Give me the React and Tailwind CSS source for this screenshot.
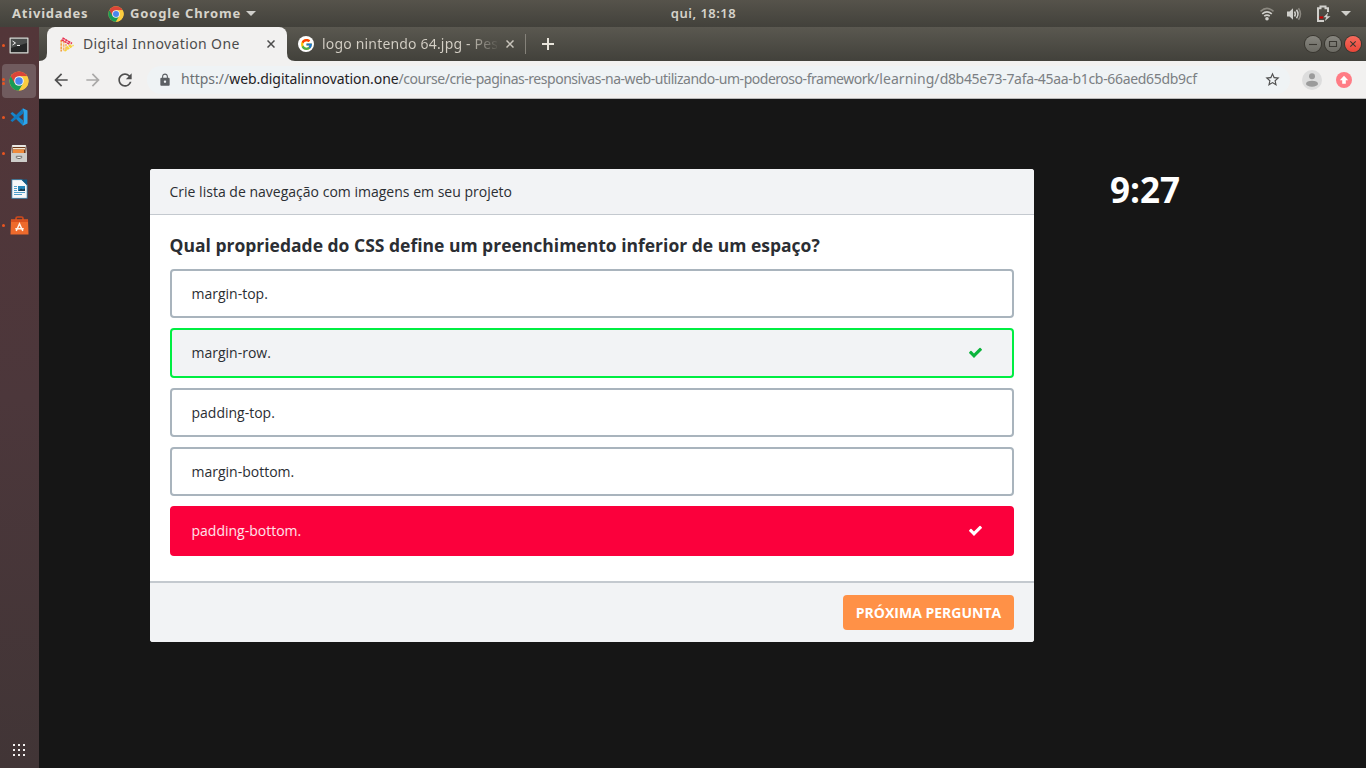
import React from "react";
import { FcGoogle } from "react-icons/fc";
import { MdArrowBack, MdArrowForward, MdRefresh, MdLock, MdStarBorder } from "react-icons/md";

function ChromeLogo({ className }) {
  return (
    <svg viewBox="0 0 48 48" className={className}>
      <circle cx="24" cy="24" r="23" fill="#fbc93a" />
      <path d="M24 24 L4.1 12.5 A23 23 0 0 0 24 47 L34 29.8Z" fill="#189b57" />
      <path d="M24 24 L14 29.8 L4.1 12.5 A23 23 0 0 1 43.9 12.5 L24 12.5Z" fill="#db4538" />
      <path d="M24 12.5H43.9A23 23 0 0 1 24 47L34 29.8Z" fill="#fccd3f" />
      <circle cx="24" cy="24" r="11.5" fill="#f4f4f2" />
      <circle cx="24" cy="24" r="9" fill="#4986ee" />
    </svg>
  );
}

function TerminalIcon() {
  return (
    <svg viewBox="0 0 20 17" className="h-[17px] w-5">
      <rect x=".5" y=".5" width="19" height="16" rx="1" fill="#d7d7d4" stroke="#8d8a87" strokeWidth=".6" />
      <rect x="1.8" y="1.8" width="16.4" height="13.4" fill="#252727" />
      <path d="M2 2h16v4L2 11z" fill="#4a4d4c" />
      <path d="M3.5 4l3 2-3 2M8 8.5h3" stroke="#f4f4f4" strokeWidth="1" fill="none" />
    </svg>
  );
}

function CodeIcon() {
  return (
    <svg viewBox="0 0 18 18" className="h-[18px] w-[18px]">
      <path d="M.5 5.5 2.3 4 13 12.3v5.4z" fill="#1687cc" />
      <path d="M.5 12.5 2.3 14 13 5.7V.3z" fill="#117ac0" />
      <path d="M12.8.3 13.6 5v8l-.8 4.7 4.7-2.2v-13z" fill="#2ba6ee" />
    </svg>
  );
}

function FilesIcon() {
  return (
    <svg viewBox="0 0 18 19" className="h-[19px] w-[18px]">
      <path d="M2 1h14l1 7v10H1V8z" fill="#bfbebb" />
      <path d="M2.5 1h13v2h-13z" fill="#e9e8e5" />
      <path d="M2.5 3h13v6h-13z" fill="#6c3a1c" />
      <path d="M3 4h12v1.5H3z" fill="#f3e6d0" />
      <path d="M3 5.5h11V9H3z" fill="#ee8a3c" />
      <rect x="1" y="9" width="16" height="9" rx="1" fill="#cecdca" />
      <path d="M6.3 12.3v1.5q2.7 1.8 5.4 0v-1.5z" stroke="#73716e" strokeWidth="1" fill="#efefed" />
    </svg>
  );
}

function WriterIcon() {
  return (
    <svg viewBox="0 0 17 20" className="h-5 w-[17px]">
      <path d="M.8.6H11l5.2 5.2v13.6H.8z" fill="#f6f8f9" stroke="#206a94" strokeWidth=".8" />
      <path d="M10.2.4h6v6z" fill="#125b86" />
      <path d="M3 7.5h3M3 9.5h3M3 11.5h3M3 13.5h11M3 15.5h8" stroke="#4f9fca" strokeWidth="1" />
      <path d="M7 7h7v5H7z" fill="#2585b8" />
      <path d="M7 12l3-2.4 2 1 2-1V12z" fill="#173c52" />
    </svg>
  );
}

function SoftwareIcon() {
  return (
    <svg viewBox="0 0 19 19" className="h-[19px] w-[19px]">
      <path d="M6 4V2.4Q6 1 7.5 1h4Q13 1 13 2.4V4" stroke="#cf4a1c" strokeWidth="1.7" fill="none" />
      <path d="M1 3.5h17l.5 15H.5z" fill="#ee6a2c" />
      <path d="M1 3.5h17l.1 2.5H.9z" fill="#d9501e" />
      <path d="M6.2 15 9.5 7.8 12.8 15M5.3 12.7h8.4" stroke="#fff3e9" strokeWidth="1.5" fill="none" />
    </svg>
  );
}

function CheckIcon({ className }) {
  return (
    <svg viewBox="0 0 1792 1792" fill="currentColor" className={className}>
      <path d="M1671 566q0 40-28 68l-724 724-136 136q-28 28-68 28t-68-28l-136-136-362-362q-28-28-28-68t28-68l136-136q28-28 68-28t68 28l294 295 656-657q28-28 68-28t68 28l136 136q28 28 28 68z" />
    </svg>
  );
}

function DockItem({ children, dots = 0, active }) {
  return (
    <div className="flex h-9 items-center pl-[2px]">
      <div className={active ? "relative flex h-[34px] w-[34px] items-center justify-center rounded-[4px] bg-[#705b5e]" : "relative flex h-[34px] w-[34px] items-center justify-center"}>
        <div className="absolute inset-y-0 left-0 flex flex-col justify-center gap-[1px]">
          {Array.from({ length: dots }).map((_, i) => (
            <span key={i} className="h-[3px] w-[3px] rounded-full bg-[#e95420]" />
          ))}
        </div>
        {children}
      </div>
    </div>
  );
}

function Dock() {
  return (
    <aside className="flex w-[39px] shrink-0 flex-col bg-linear-to-b from-[#533639] via-[#4c373b] to-[#413536]">
      <DockItem dots={1}><TerminalIcon /></DockItem>
      <DockItem dots={2} active><ChromeLogo className="h-[20px] w-[20px]" /></DockItem>
      <DockItem dots={1}><CodeIcon /></DockItem>
      <DockItem dots={1}><FilesIcon /></DockItem>
      <DockItem><WriterIcon /></DockItem>
      <DockItem dots={1}><SoftwareIcon /></DockItem>
      <div className="mt-auto mb-[12px] ml-[13px] grid w-3 grid-cols-3 gap-[3px]">
        {Array.from({ length: 9 }).map((_, i) => (
          <span key={i} className="h-[2px] w-[2px] bg-[#f4f2f1]" />
        ))}
      </div>
    </aside>
  );
}

function TopBar() {
  return (
    <header className="grid h-[27px] shrink-0 grid-cols-[1fr_auto_1fr] items-center bg-linear-to-b from-[#56534b] to-[#42413b] font-['Noto_Sans',sans-serif] text-[13px] font-bold text-[#d6d3cb]">
      <div className="flex items-center whitespace-nowrap pl-3">
        <span className="w-[76px] tracking-[0.8px]">Atividades</span>
        <ChromeLogo className="ml-5 h-4 w-4" />
        <span className="ml-[6px] w-[112px] tracking-[0.87px]">Google Chrome</span>
        <svg viewBox="0 0 10 5" className="ml-[4px] h-[5px] w-[10px]"><path d="M0 0h10L5 5z" fill="#d0cfcb" /></svg>
      </div>
      <span className="pl-[41px] font-semibold tracking-[0.5px]">qui, 18:18</span>
      <div className="flex items-center justify-end pr-[15px]">
        <svg viewBox="0 0 14 14" className="h-[14px] w-[14px]" fill="none" strokeWidth="1.6">
          <path d="M.5 4.4Q7-1.5 13.5 4.4" stroke="#8b8880" />
          <path d="M2.2 6.8Q7 2.8 11.8 6.8" stroke="#d0cfcb" />
          <path d="M4.2 9.2Q7 7 9.8 9.2" stroke="#d0cfcb" />
          <circle cx="7" cy="11.8" r="1.8" fill="#d0cfcb" />
        </svg>
        <svg viewBox="0 0 16 14" className="ml-3 h-[14px] w-4" fill="none" strokeWidth="1.5">
          <path d="M1 4.5h2.5L7 1.3v11.4L3.5 9.5H1z" fill="#d0cfcb" />
          <path d="M8.5 4.5q1.7 2.5 0 5M10.5 2.8q3 4.2 0 8.4" stroke="#d0cfcb" />
          <path d="M12.5 1.3q4 5.7 0 11.4" stroke="#8b8880" />
        </svg>
        <svg viewBox="0 0 15 17" className="ml-[14px] h-[17px] w-[15px]" fill="none">
          <path d="M6 15.9H2V3.2h2.5V1.5h5v1.7H12V7M6 15.9h2" stroke="#d0cfcb" strokeWidth="2" />
          <path d="M3.6 11.4h3.6v2.1H3.6z" fill="#cc0000" />
          <path d="M12.2 7.5 7.5 12.2h2.8L8.6 16.2l5.9-4.9h-3.4z" fill="#d0cfcb" />
        </svg>
        <svg viewBox="0 0 10 5" className="ml-[10px] h-[5px] w-[10px]"><path d="M0 0h10L5 5z" fill="#d0cfcb" /></svg>
      </div>
    </header>
  );
}

function CloseX({ className }) {
  return (
    <svg viewBox="0 0 8 8" className={className}><path d="M.5.5l7 7m0-7l-7 7" stroke="currentColor" strokeWidth="1.5" /></svg>
  );
}

function InnovationLogo() {
  return (
    <svg viewBox="0 0 14 15" className="h-[15px] w-[14px]" fill="none" strokeWidth="1.6" strokeDasharray="2.6 .6">
      <path d="M1.2 3v11.5" stroke="#f2a044" />
      <path d="M3.7 4v10M6 7v6" stroke="#f5b266" />
      <path d="M4.5 14 13.5 8.2M6 11l5.5-3.5" stroke="#f6d03c" />
      <path d="M2.5 .9 12 6.5M1.5 2.8l8.5 4.7" stroke="#e9304f" />
    </svg>
  );
}

function WindowButton({ close, children }) {
  return (
    <span className={close ? "flex h-4 w-4 items-center justify-center rounded-full bg-linear-to-b from-[#f66a5c] to-[#ea4538] ring-1 ring-[#38362f]" : "flex h-4 w-4 items-center justify-center rounded-full bg-linear-to-b from-[#87867f] to-[#6c6b64] ring-1 ring-[#38362f]"}>
      <svg viewBox="0 0 16 16" className="h-4 w-4" fill="none" stroke="#3a3832" strokeWidth="1.1">{children}</svg>
    </span>
  );
}

function TabStrip() {
  return (
    <div className="flex h-[34px] shrink-0 items-center bg-linear-to-b from-[#5a5850] to-[#42413b] font-['Noto_Sans',sans-serif] text-[14px]">
      <svg viewBox="0 0 8 8" className="h-2 w-2 self-end"><path d="M8 0v8H0Q8 8 8 0" fill="#f2f1f0" /></svg>
      <div className="flex h-full w-[240px] items-center rounded-t-[8px] bg-[#f2f1f0] pl-[13px] text-[#4c4c4c]">
        <InnovationLogo />
        <span className="mb-[2px] ml-[9px] w-[184px] whitespace-nowrap tracking-[0.38px]">Digital Innovation One</span>
        <CloseX className="h-2 w-2" />
      </div>
      <svg viewBox="0 0 8 8" className="h-2 w-2 self-end"><path d="M0 0v8h8Q0 8 0 0" fill="#f2f1f0" /></svg>
      <div className="ml-[3px] flex h-4 w-4 items-center justify-center rounded-full bg-white"><FcGoogle className="h-[13px] w-[13px]" /></div>
      <span className="mb-[2px] ml-2 w-[175px] overflow-hidden whitespace-nowrap bg-linear-to-r from-[#d5d0c6] from-82% to-[#d5d0c6]/10 bg-clip-text tracking-[0.18px] text-transparent">logo nintendo 64.jpg - Pes</span>
      <CloseX className="ml-[9px] h-2 w-2 text-[#c9c5bc]" />
      <span className="ml-[11px] h-5 w-px bg-[#85827a]" />
      <svg viewBox="0 0 12 12" className="ml-4 h-3 w-3"><path d="M6 0v12M0 6h12" stroke="#e8e4db" strokeWidth="2" /></svg>
      <div className="ml-auto flex items-center gap-1 pr-[5px]">
        <WindowButton><path d="M4 8.5h8" /></WindowButton>
        <WindowButton><path d="M4.5 5.5h7v5h-7z" /></WindowButton>
        <WindowButton close><path d="M5.3 5.3l5.4 5.4m0-5.4-5.4 5.4" /></WindowButton>
      </div>
    </div>
  );
}

function AddressBar() {
  return (
    <div className="flex h-[38px] shrink-0 items-center border-b border-[#b8b8b8] bg-[#f2f1f0] text-[#505050]">
      <MdArrowBack className="ml-3 h-5 w-5" />
      <MdArrowForward className="ml-3 h-5 w-5 text-[#aaa9a8]" />
      <MdRefresh className="ml-3 h-5 w-5" />
      <div className="ml-[12px] flex h-7 w-[1143px] items-center rounded-full bg-[#eff3f5]">
        <MdLock className="ml-[11px] h-[14px] w-[14px] text-[#5b5f63]" />
        <span className="mb-[2px] ml-[9px] whitespace-nowrap font-['Noto_Sans',sans-serif] text-[14px] text-[#7b7f83]">
          <span className="text-[#6c7074]">https://</span><span className="tracking-[-0.06px] text-[#1f2225]">web.digitalinnovation.one</span><span className="tracking-[-0.47px]">/course/crie-paginas-responsivas-na-web-utilizando-um-poderoso-framework</span><span className="tracking-[0.05px]">/learning/</span><span className="tracking-[-0.32px]">d8b45e73-7afa-45aa-b1cb-66aed65db9cf</span>
        </span>
        <MdStarBorder className="ml-auto mr-[9px] h-[17px] w-[17px]" />
      </div>
      <svg viewBox="0 0 20 20" className="ml-[12px] h-5 w-5">
        <circle cx="10" cy="10" r="10" fill="#dddddd" />
        <circle cx="10" cy="6.2" r="3" fill="#9b9b9b" /><ellipse cx="10" cy="13.7" rx="6" ry="3" fill="#9b9b9b" />
      </svg>
      <svg viewBox="0 0 16 16" className="ml-[14px] h-4 w-4">
        <circle cx="8" cy="8" r="8" fill="#ff7c85" /><path d="M8 3.8l4.2 4.4H9.8v3.6H6.2V8.2H3.8z" fill="#fff" />
      </svg>
    </div>
  );
}

const answers = [
  { label: "margin-top.", look: "border-[#a9b4bd] bg-white text-[#2b2e33]" },
  { label: "margin-row.", look: "border-[#00ee42] bg-[#f2f3f5] text-[#2b2e33]", check: "text-[#0cb43c]" },
  { label: "padding-top.", look: "border-[#a9b4bd] bg-white text-[#2b2e33]" },
  { label: "margin-bottom.", look: "border-[#a9b4bd] bg-white text-[#2b2e33]" },
  { label: "padding-bottom.", look: "border-[#fb003c] bg-[#fb003c] pb-px text-white/90", check: "text-white" },
];

function Quiz() {
  return (
    <section className="mt-[70px] ml-[111px] flex h-[473px] w-[884px] shrink-0 flex-col overflow-hidden rounded-[3px] bg-white">
      <div className="flex h-[46px] shrink-0 items-center border-b border-[#c4c9cf] bg-[#f2f3f5] px-[19.5px] text-[14px] tracking-[0.01px] text-[#2b2e33]">Crie lista de navegação com imagens em seu projeto</div>
      <div className="flex flex-1 flex-col px-5 pt-[18px]">
        <h1 className="-ml-[0.5px] h-[35.8px] whitespace-nowrap text-[17.5px] leading-[25px] font-bold text-[#2b2e33]">Qual propriedade do CSS define um preenchimento inferior de um espaço?</h1>
        <div className="flex flex-col gap-[10px]">
          {answers.map((a) => (
            <div key={a.label} className={`flex h-[49.4px] items-center justify-between rounded-[4px] border-2 pr-[29px] pl-[19.5px] text-[14px] ${a.look}`}>
              <span>{a.label}</span>
              {a.check && <CheckIcon className={`h-[15px] w-[15px] ${a.check}`} />}
            </div>
          ))}
        </div>
      </div>
      <div className="flex h-[61px] shrink-0 items-center justify-end border-t-2 border-[#c4c9cf] bg-[#f2f3f5] pr-5">
        <button className="h-[35px] w-[171px] whitespace-nowrap rounded-[4px] bg-[#ff9147] text-[14px] font-bold text-white">PRÓXIMA PERGUNTA</button>
      </div>
    </section>
  );
}

export default function App() {
  return (
    <div className="flex h-[768px] w-[1366px] flex-col overflow-hidden">
      <TopBar />
      <div className="flex min-h-0 flex-1">
        <Dock />
        <div className="flex min-w-0 flex-1 flex-col">
          <TabStrip />
          <AddressBar />
          <main className="flex flex-1 items-start bg-[#161616] font-['Open_Sans',sans-serif]">
            <Quiz />
            <div className="mt-[66px] ml-[76px] text-[35px] leading-[50px] font-bold text-white">9:27</div>
          </main>
        </div>
      </div>
    </div>
  );
}
